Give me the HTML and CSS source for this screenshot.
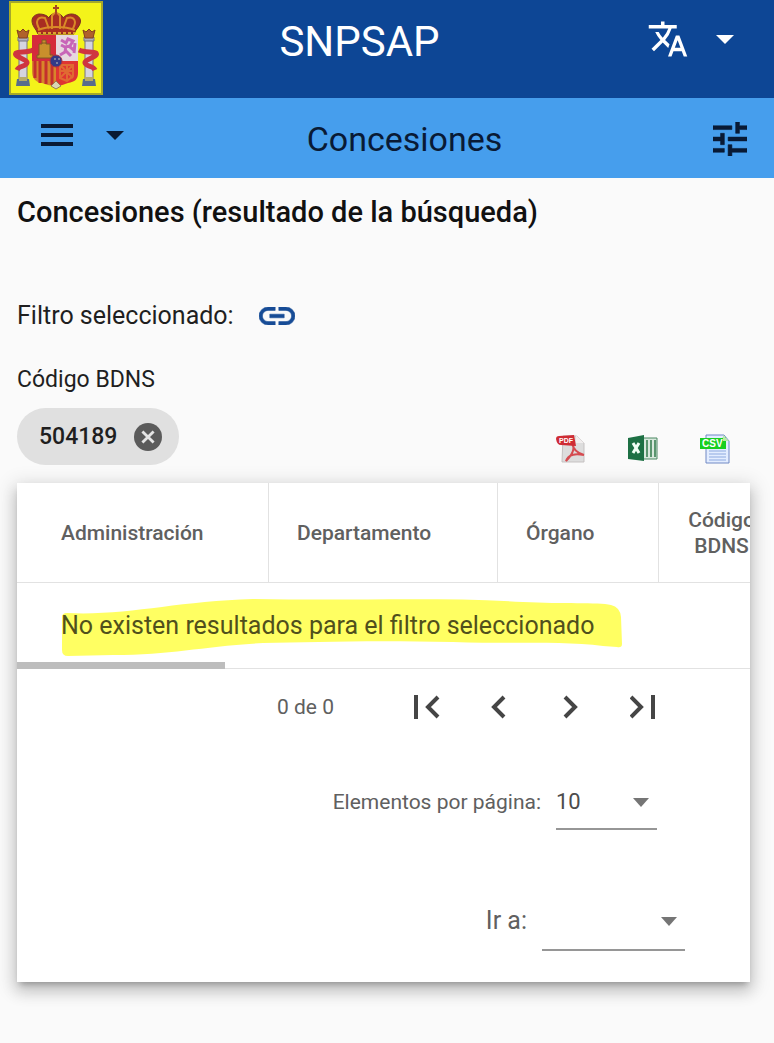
FILE: index.html
```html
<!DOCTYPE html>
<html lang="es">
<head>
<meta charset="utf-8">
<meta name="viewport" content="width=device-width, initial-scale=1">
<title>SNPSAP - Concesiones</title>
<link rel="stylesheet" href="styles.css">
</head>
<body>
<header class="topbar">
  <a class="crest" href="#" aria-label="Inicio">
    <svg viewBox="0 0 94 94" width="94" height="94" aria-hidden="true">
      <path fill="#f4f31a" stroke="#a5a82c" stroke-width="2" d="M1 1h92v92H1z"/>
      <g stroke="#77727e" stroke-width="1" fill="#d5d4df">
        <path d="M10 39h8v41h-8zM76 39h8v41h-8z"/>
        <path fill="#aeb0bd" d="M9 36h10v4H9zM75 36h10v4H75z"/>
      </g>
      <path fill="#596c8c" d="M8 78h12l1 7H7zM74 78h12l1 7H73z"/>
      <path fill="#b7ab68" d="M10 76h8v4h-8zM76 76h8v4h-8z"/>
      <path fill="#b0622b" stroke="#84401f" d="M8 29l3 2 3-3 3 3 3-2-2 8h-8zM74 29l3 2 3-3 3 3 3-2-2 8h-8z"/>
      <g fill="none" stroke="#cf3540" stroke-width="5">
        <path d="M24 49c-6 3-14 1-17 3-3 4 12 6 11 10-1 4-8 2-10 7M70 49c6 3 14 1 17 3 3 4-12 6-11 10 1 4 8 2 10 7"/>
      </g>
      <path fill="#d52b3b" d="M23 34h24v26H23z"/>
      <path fill="#e6d8df" d="M47 34h22v26H47z"/>
      <path fill="#d8852a" d="M23 60h24v25c-7 0-10-2-14-3-7-1-10-5-10-12z"/>
      <path stroke="#c4302d" stroke-width="3" d="M26 60v17M31 60v22M37 60v23M43 60v24"/>
      <path fill="#df3532" d="M47 60h22v12c0 6-3 9-10 10-4 1-7 3-12 3z"/>
      <path fill="none" stroke="#e06a32" stroke-width="2" d="M51 64h13v11l-6 5-7-3zM51 64l13 13M64 64L51 77M58 63v17M50 70h15"/>
      <path fill="#c98f2c" stroke="#805b24" stroke-width="1" d="M30 54V43h3v-4h4v4h4v11h3v3H28v-3zM33 42h5"/>
      <path fill="none" stroke="#c865b8" stroke-width="3" d="M52 39l5 3 2-4 5 2-3 5-5 1-4-2M57 45l-1 6-5 3M57 50l5 5M61 46l5 4M65 52l1-10"/>
      <circle cx="47" cy="60" r="6" fill="#333a88" stroke="#a63245" stroke-width="1"/>
      <path fill="#7d7fa0" d="M45 57h2v2h-2zm4 0h2v2h-2zm-2 4h2v2h-2z"/>
      <path fill="#d9d6b4" stroke="#987d51" d="M47 80l5 5-5 3-5-3z"/>
      <path fill="#a82d22" stroke="#793320" d="M27 29c-7-9-4-15 3-16 4 0 8 1 10 4 1-6 13-6 14 0 3-4 9-5 13-3 6 3 6 8 0 15l-2 4H29z"/>
      <path fill="none" stroke="#d98a28" stroke-width="2" d="M31 29c-6-9-2-14 5-12l4 11M63 29c6-9 2-14-5-12l-4 11M43 28V15c2-4 6-4 8 0v13M29 29c9-4 27-4 37 0"/>
      <path stroke="#a64523" stroke-width="2" d="M47 4v9M44 7h6"/>
      <path stroke="#dfa12d" stroke-width="2" stroke-dasharray="3 2" d="M29 32h37"/>
    </svg>
  </a>
  <h1 class="topbar-title">SNPSAP</h1>
  <button class="icon-button language" type="button" aria-label="Idioma">
    <svg viewBox="0 0 24 24" width="42" height="42" fill="currentColor" aria-hidden="true"><path d="M12.87 15.07l-2.54-2.51.03-.03A17.52 17.52 0 0 0 14.07 6H17V4h-7V2H8v2H1v2h11.17A15.8 15.8 0 0 1 9 11.35 15.6 15.6 0 0 1 6.69 8h-2a17.6 17.6 0 0 0 2.98 4.56l-5.09 5.02L4 19l5-5 3.11 3.11zM18.5 10h-2L12 22h2l1.12-3h4.75L21 22h2zm-2.62 7l1.62-4.33L19.12 17z"/></svg>
    <svg viewBox="0 0 18 9" width="18" height="9" fill="currentColor" aria-hidden="true"><path d="M0 0h18L9 9z"/></svg>
  </button>
</header>

<nav class="subbar" aria-label="Principal">
  <button class="icon-button menu" type="button" aria-label="Menú">
    <svg viewBox="0 0 34 24" width="34" height="24" fill="currentColor" aria-hidden="true"><path d="M1 1h32v4H1zm0 9h32v4H1zm0 9h32v4H1z"/></svg>
    <svg viewBox="0 0 18 9" width="18" height="9" fill="currentColor" aria-hidden="true"><path d="M0 0h18L9 9z"/></svg>
  </button>
  <h2 class="subbar-title">Concesiones</h2>
  <button class="icon-button tune" type="button" aria-label="Filtros">
    <svg viewBox="3 3 18 18" width="34" height="34" fill="currentColor" stroke="currentColor" stroke-width=".3" aria-hidden="true"><path d="M3 17v2h6v-2zM3 5v2h10V5zm10 16v-2h8v-2h-8v-2h-2v6zM7 9v2H3v2h4v2h2V9zm14 4v-2H11v2zm-6-4h2V7h4V5h-4V3h-2z"/></svg>
  </button>
</nav>

<main class="content">
  <h3 class="page-title">Concesiones (resultado de la búsqueda)</h3>
  <div class="filter-row">
    <span>Filtro seleccionado:</span>
    <a class="link" href="#" aria-label="Enlace al filtro">
      <svg viewBox="2 7 20 10" width="36" height="18" fill="currentColor" stroke="currentColor" stroke-width=".3" aria-hidden="true"><path d="M3.9 12A3.1 3.1 0 0 1 7 8.9h4V7H7a5 5 0 0 0 0 10h4v-1.9H7A3.1 3.1 0 0 1 3.9 12zM8 13h8v-2H8zm9-6h-4v1.9h4a3.1 3.1 0 0 1 0 6.2h-4V17h4a5 5 0 0 0 0-10z"/></svg>
    </a>
  </div>
  <p class="filter-name">Código BDNS</p>
  <div class="tools">
    <span class="chip">504189
      <button class="icon-button" type="button" aria-label="Quitar 504189">
        <svg viewBox="2 2 20 20" width="28" height="28" aria-hidden="true"><circle cx="12" cy="12" r="10" fill="#5b5b5b"/><path d="M8 8l8 8m0-8l-8 8" stroke="#e5e5e5" stroke-width="2"/></svg>
      </button>
    </span>
    <div class="exports">
      <button class="icon-button" type="button" aria-label="Exportar a PDF">
        <svg viewBox="0 0 30 30" width="30" height="30" aria-hidden="true">
          <path fill="#ddd" stroke="#c5c1c1" d="M7 2h14l7 7v19H6z"/><path fill="#f1eeee" d="M20 1v8h8z"/>
          <path fill="none" stroke="#d54b50" stroke-width="2" d="M16 9c4 6-1 13-6 18 2-6 9-8 18-6-8-2-11-7-12-12z"/>
          <path fill="#cf2c34" d="M0 5q0-3 3-3l15-1 2 11-15-1q-4 0-5-6z"/>
          <text x="3" y="9" class="file-pdf">PDF</text>
        </svg>
      </button>
      <button class="icon-button" type="button" aria-label="Exportar a Excel">
        <svg viewBox="0 0 30 30" width="30" height="30" aria-hidden="true">
          <path fill="#d8e8dd" stroke="#4b8863" d="M15 4h14v21H15z"/><path stroke="#5a956f" stroke-width="2" d="M19 6v17M23 6v17M27 6v17"/>
          <path fill="#1d7044" d="M0 4l16-3v26L0 25z"/><path stroke="#f1fff5" stroke-width="3" d="M5 9l6 10m0-10L5 19"/>
        </svg>
      </button>
      <button class="icon-button" type="button" aria-label="Exportar a CSV">
        <svg viewBox="0 0 30 30" width="30" height="30" aria-hidden="true">
          <path fill="#e3edff" stroke="#7089c4" stroke-width="1" d="M6 1h18l5 6v22H6z"/>
          <path stroke="#8da9df" stroke-width="1" d="M9 17h17M9 20h17M9 23h17M9 26h17"/>
          <path fill="#18cf20" d="M0 4h22l4-1v12H0z"/><path fill="#b9e9a8" d="M23 1l6 6h-6z"/>
          <text x="2" y="13" class="file-csv">CSV</text>
        </svg>
      </button>
    </div>
  </div>

  <section class="card">
    <div class="table-scroll">
      <table class="results">
        <colgroup><col class="col-admin"><col class="col-dept"><col class="col-organ"><col class="col-code"></colgroup>
        <thead><tr><th scope="col">Administración</th><th scope="col">Departamento</th><th scope="col">Órgano</th><th scope="col">Código BDNS</th></tr></thead>
        <tbody><tr><td colspan="4">
          <span class="marked">
            <svg class="marker" viewBox="0 0 564 60" preserveAspectRatio="none" aria-hidden="true"><path fill="#ffff62" d="M1 18q0-4 5-4c60 3 110-12 186-14 100 2 190-2 270 3 40 2 75 0 88 3q9 2 10 12l1 27q0 4-5 3l-14-1c-40-5-90-2-150-4-80-2-140 0-190 1-60 3-90 12-150 12l-45 1q-6 0-6-6z"/></svg>
            <span class="message">No existen resultados para el filtro seleccionado</span>
          </span>
        </td></tr></tbody>
      </table>
      <span class="scroll-thumb"></span>
    </div>
    <div class="pager">
      <span class="range">0 de 0</span>
      <div class="page-buttons">
        <button class="icon-button" type="button" aria-label="Primera página"><svg viewBox="0 0 26 26" width="26" height="26" aria-hidden="true"><path d="M2 1v24M24 3L14 13l10 10"/></svg></button>
        <button class="icon-button" type="button" aria-label="Página anterior"><svg viewBox="0 0 26 26" width="26" height="26" aria-hidden="true"><path d="M18 3L8 13l10 10"/></svg></button>
        <button class="icon-button" type="button" aria-label="Página siguiente"><svg viewBox="0 0 26 26" width="26" height="26" aria-hidden="true"><path d="M7 3l10 10L7 23"/></svg></button>
        <button class="icon-button" type="button" aria-label="Última página"><svg viewBox="0 0 26 26" width="26" height="26" aria-hidden="true"><path d="M23 1v24M1 3l10 10L1 23"/></svg></button>
      </div>
    </div>
    <div class="field size-field">
      <label for="page-size">Elementos por página:</label>
      <span class="select-box"><select id="page-size"><option>10</option><option>25</option><option>50</option></select><svg viewBox="0 0 16 9" width="16" height="9" aria-hidden="true"><path d="M0 0h16L8 9z"/></svg></span>
    </div>
    <div class="field goto-field">
      <label for="go-to">Ir a:</label>
      <span class="select-box"><select id="go-to"></select><svg viewBox="0 0 16 9" width="16" height="9" aria-hidden="true"><path d="M0 0h16L8 9z"/></svg></span>
    </div>
  </section>
</main>
</body>
</html>
```

FILE: styles.css
```css
* { box-sizing: border-box; }
body { margin: 0; background: #fafafa; color: #1f1f1f; font-family: Roboto, "Liberation Sans", sans-serif; font-size: 23px; line-height: 32px; }
h1, h2, h3, p { margin: 0; }
svg { display: block; flex: none; }
.icon-button { display: flex; align-items: center; justify-content: center; padding: 0; border: 0; background: none; color: inherit; cursor: pointer; }

.topbar, .subbar { display: grid; grid-template-columns: 1fr auto 1fr; }
.topbar { height: 98px; padding: 1px 40px 0 9px; background: #0d4695; color: #fff; }
.crest { justify-self: start; }
.topbar-title { margin-left: -24px; padding-top: 17px; font-size: 42px; line-height: 48px; font-weight: 400; }
.language { justify-self: end; align-self: start; gap: 27px; padding-top: 17px; }
.subbar { align-items: center; height: 80px; padding: 2px 27px 0 40px; background: #469eed; color: #091a35; }
.subbar-title { margin-left: 22px; font-size: 34px; line-height: 48px; font-weight: 400; }
.menu { justify-self: start; gap: 32px; padding-bottom: 8px; }
.tune { justify-self: end; }

.content { padding: 16px 24px 60px 17px; }
.page-title { font-size: 29px; line-height: 36px; font-weight: 500; color: #111; }
.filter-row { display: flex; align-items: center; gap: 25px; margin-top: 70px; font-size: 25px; line-height: 32px; }
.link { color: #174c96; }
.filter-name { margin-top: 32px; }
.tools { display: flex; align-items: center; justify-content: space-between; margin-top: 12px; padding-right: 20px; }
.chip { display: flex; align-items: center; gap: 17px; height: 57px; padding: 0 17px 0 22px; border-radius: 29px; background: #e0e0e0; font-weight: 500; }
.exports { display: flex; gap: 42px; padding-top: 24px; }
.file-pdf, .file-csv { font-family: "Liberation Sans", sans-serif; font-weight: 700; fill: #fff; }
.file-pdf { font-size: 7px; }
.file-csv { font-size: 10px; }

.card { margin-top: 18px; padding-bottom: 31px; background: #fff; box-shadow: 0 5px 6px -3px rgba(0,0,0,.25), 0 9px 14px 1px rgba(0,0,0,.14), 0 4px 18px 4px rgba(0,0,0,.12); color: #606060; }
.table-scroll { position: relative; overflow: hidden; }
.results { width: 768px; table-layout: fixed; border-collapse: separate; border-spacing: 0; }
.col-admin { width: 252px; }
.col-dept { width: 229px; }
.col-organ { width: 161px; }
.col-code { width: 126px; }
.results th { height: 100px; padding: 0 28px; border-right: 1px solid #e2e2e2; border-bottom: 1px solid #e2e2e2; font-size: 21px; line-height: 26px; font-weight: 500; text-align: left; }
.results th:first-child { padding-left: 44px; }
.results th:last-child { padding: 0 24px; text-align: center; }
.results td { height: 86px; padding: 0 0 0 44px; border-bottom: 1px solid #e2e2e2; font-size: 25px; line-height: 32px; }
.marked { position: relative; display: inline-block; }
.marker { position: absolute; left: 0; top: -11px; width: 564px; height: 60px; }
.message { position: relative; color: #50501c; }
.scroll-thumb { position: absolute; left: 0; bottom: 0; width: 208px; height: 7px; background: #bdbdbd; }

.pager { display: flex; align-items: center; justify-content: flex-end; gap: 80px; height: 76px; padding-right: 94px; font-size: 21px; }
.page-buttons { display: flex; gap: 46px; }
.page-buttons svg { fill: none; stroke: #454545; stroke-width: 4; }
.field { display: flex; align-items: flex-start; justify-content: flex-end; gap: 15px; }
.size-field { margin-top: 41px; padding-right: 93px; font-size: 21px; }
.goto-field { margin-top: 75px; padding-right: 65px; font-size: 25px; }
.select-box { position: relative; width: 101px; height: 44px; border-bottom: 2px solid #969696; }
.goto-field .select-box { width: 143px; height: 46px; }
.select-box select { display: block; width: 100%; height: 32px; padding: 0; border: 0; appearance: none; background: none; color: #4c4c4c; font-family: inherit; font-size: 22px; line-height: 32px; }
.select-box svg { position: absolute; right: 8px; top: 12px; fill: #757575; pointer-events: none; }
```
